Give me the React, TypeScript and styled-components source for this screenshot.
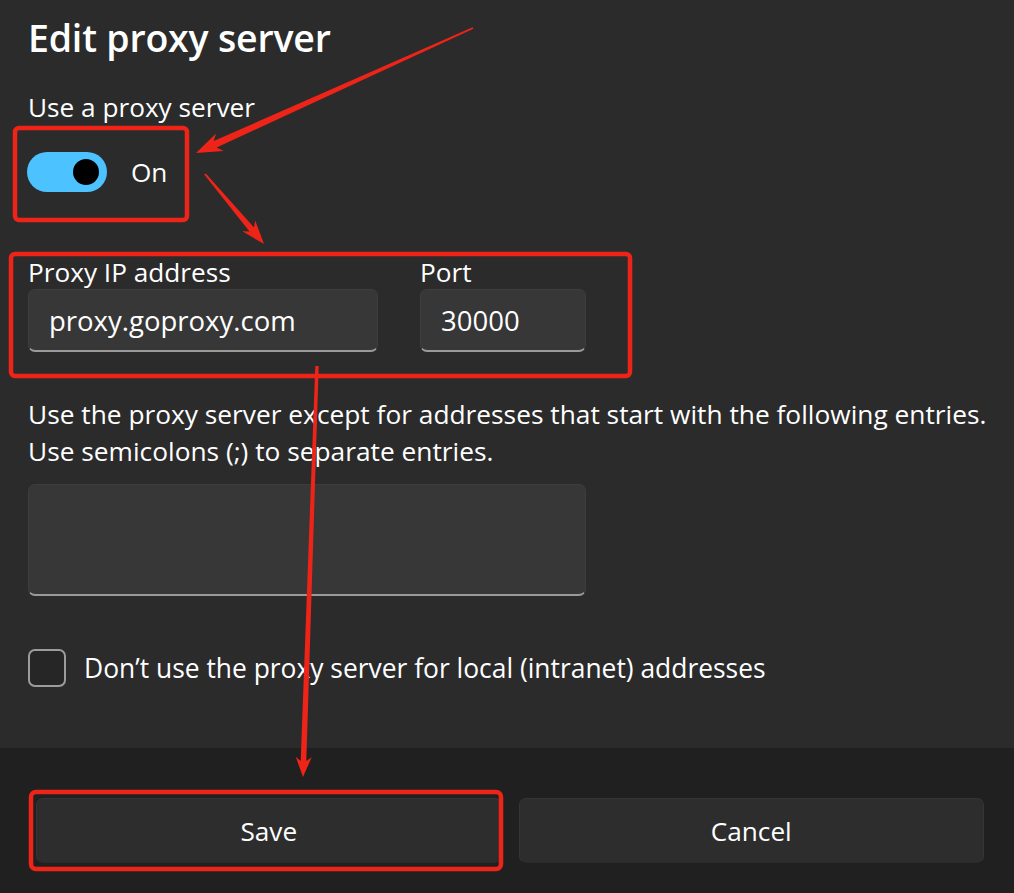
import type { FC } from 'react';
import styled, { createGlobalStyle } from 'styled-components';

const GlobalStyle = createGlobalStyle`
  html, body {
    margin: 0;
    padding: 0;
    background: #2b2b2b;
  }
  * {
    box-sizing: border-box;
  }
`;

const StyledDialog = styled.div`
  position: relative;
  width: 1014px;
  height: 893px;
  display: flex;
  flex-direction: column;
  background: #2b2b2b;
  color: #ffffff;
  font-family: 'Open Sans', 'Noto Sans', sans-serif;
  overflow: hidden;
`;

const StyledBody = styled.div`
  flex: 1;
  display: flex;
  flex-direction: column;
  padding: 13px 20px 0 28px;
`;

const StyledTitle = styled.h1`
  margin: 0;
  font-size: 37.5px;
  font-weight: 600;
  line-height: 50px;
  letter-spacing: -0.2px;
`;

const StyledLabel = styled.div`
  font-size: 26.2px;
  line-height: 34px;
`;

const StyledSectionLabel = styled(StyledLabel)`
  margin-top: 27px;
`;

const StyledToggleRow = styled.div`
  display: flex;
  align-items: center;
  gap: 24px;
  margin-top: 28px;
  height: 39px;
`;

const StyledToggle = styled.div<{ $on: boolean }>`
  width: 80px;
  height: 40px;
  margin-left: -1px;
  border-radius: 20px;
  background: ${({ $on }) => ($on ? '#4cc2ff' : 'transparent')};
  display: flex;
  align-items: center;
  justify-content: ${({ $on }) => ($on ? 'flex-end' : 'flex-start')};
  padding: 0 8px;
`;

const StyledKnob = styled.div`
  width: 26px;
  height: 26px;
  border-radius: 50%;
  background: #000000;
`;

const StyledFieldsRow = styled.div`
  display: flex;
  gap: 42px;
  margin-top: 64px;
`;

const StyledField = styled.div<{ $width: number }>`
  display: flex;
  flex-direction: column;
  width: ${({ $width }) => $width}px;
`;

const StyledInput = styled.div<{ $height: number }>`
  height: ${({ $height }) => $height}px;
  border-radius: 7px;
  background: #373737;
  border: 1px solid #3d3d3d;
  border-bottom: 2px solid #9a9a9a;
  display: flex;
  align-items: center;
  padding: 0 20px;
  font-size: 27.5px;
`;

const StyledDescription = styled.p`
  margin: 44px 0 0 0;
  font-size: 26.3px;
  line-height: 37px;
  white-space: nowrap;
`;

const StyledArea = styled(StyledInput)`
  width: 558px;
  margin-top: 14px;
`;

const StyledCheckRow = styled.label`
  display: flex;
  align-items: center;
  gap: 18px;
  margin-top: 53px;
  font-size: 26.4px;
  line-height: 34px;
  white-space: nowrap;
`;

const StyledCheckbox = styled.span`
  width: 38px;
  height: 38px;
  border-radius: 7px;
  border: 2px solid #9c9c9c;
  background: #262626;
`;

const StyledFooter = styled.div`
  height: 145px;
  background: #202020;
  display: flex;
  gap: 17px;
  padding: 50px 30px 0 36px;
`;

const StyledButton = styled.button`
  flex: 1;
  height: 65px;
  border-radius: 7px;
  border: 1px solid #353535;
  border-bottom-color: #2a2a2a;
  background: #2d2d2d;
  color: #ffffff;
  font-family: inherit;
  font-size: 26.2px;
`;

const StyledOverlay = styled.svg`
  position: absolute;
  inset: 0;
  pointer-events: none;
`;

type Pt = [number, number];

// tapered arrow polygon: tail -> tip, shaft grows from w0 to w1, barbed head
const arrowPoints = (tail: Pt, tip: Pt, w0: number, w1: number, headLen: number, headHalf: number) => {
  const dx = tip[0] - tail[0];
  const dy = tip[1] - tail[1];
  const len = Math.hypot(dx, dy);
  const ux = dx / len;
  const uy = dy / len;
  const nx = -uy;
  const ny = ux;
  const bx = tip[0] - ux * headLen;
  const by = tip[1] - uy * headLen;
  const sweep = headLen * 0.25;
  const pts: Pt[] = [
    [tail[0] + nx * w0, tail[1] + ny * w0],
    [bx + nx * w1, by + ny * w1],
    [bx + nx * headHalf - ux * sweep, by + ny * headHalf - uy * sweep],
    tip,
    [bx - nx * headHalf - ux * sweep, by - ny * headHalf - uy * sweep],
    [bx - nx * w1, by - ny * w1],
    [tail[0] - nx * w0, tail[1] - ny * w0],
  ];
  return pts.map((p) => p.map((v) => v.toFixed(1)).join(',')).join(' ');
};

const Annotations: FC = () => (
  <StyledOverlay width="1014" height="893" viewBox="0 0 1014 893">
    <g fill="none" stroke="#ee2418" strokeWidth="4.5">
      <rect x="15" y="128" width="172" height="92" rx="4" />
      <rect x="11" y="254" width="619" height="122" rx="4" />
      <rect x="31" y="792" width="470" height="77" rx="5" />
    </g>
    <g fill="#ee2418">
      <polygon points={arrowPoints([473, 28], [196, 153], 0.9, 3.6, 21, 9.5)} />
      <polygon points={arrowPoints([205, 174], [264, 244], 1, 3, 19, 8.5)} />
      <polygon points={arrowPoints([317, 366], [303, 777], 1.7, 2.8, 16, 8)} />
    </g>
  </StyledOverlay>
);

const App: FC = () => {
  return (
    <StyledDialog>
      <GlobalStyle />
      <StyledBody>
        <StyledTitle>Edit proxy server</StyledTitle>
        <StyledSectionLabel>Use a proxy server</StyledSectionLabel>
        <StyledToggleRow>
          <StyledToggle $on>
            <StyledKnob />
          </StyledToggle>
          <StyledLabel>On</StyledLabel>
        </StyledToggleRow>
        <StyledFieldsRow>
          <StyledField $width={350}>
            <StyledLabel>Proxy IP address</StyledLabel>
            <StyledInput $height={63}>proxy.goproxy.com</StyledInput>
          </StyledField>
          <StyledField $width={166}>
            <StyledLabel>Port</StyledLabel>
            <StyledInput $height={63}>30000</StyledInput>
          </StyledField>
        </StyledFieldsRow>
        <StyledDescription>
          Use the proxy server except for addresses that start with the following entries.
          <br />
          Use semicolons (;) to separate entries.
        </StyledDescription>
        <StyledArea $height={112} />
        <StyledCheckRow>
          <StyledCheckbox />
          Don’t use the proxy server for local (intranet) addresses
        </StyledCheckRow>
      </StyledBody>
      <StyledFooter>
        <StyledButton>Save</StyledButton>
        <StyledButton>Cancel</StyledButton>
      </StyledFooter>
      <Annotations />
    </StyledDialog>
  );
};

export default App;
